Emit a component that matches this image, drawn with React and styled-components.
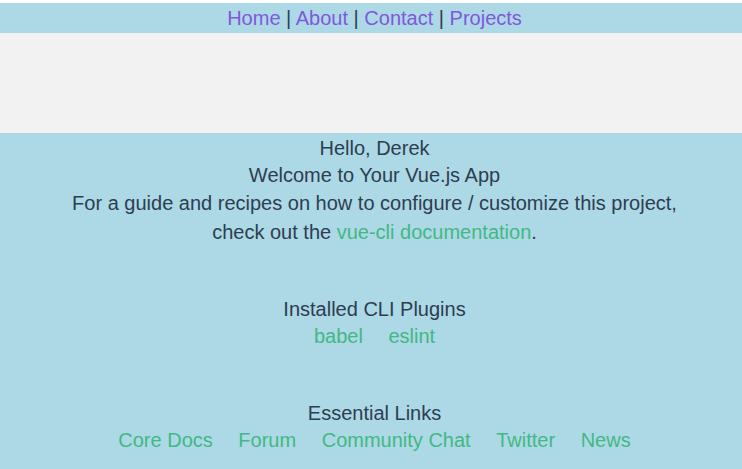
import { Fragment } from 'react';
import styled, { createGlobalStyle } from 'styled-components';

const GlobalStyle = createGlobalStyle`
  html, body {
    margin: 0;
    padding: 0;
    background: #ffffff;
  }
  body {
    padding-top: 3px;
    font-family: "Liberation Sans", Arial, sans-serif;
  }
`;

const plugins = ['babel', 'eslint'];
const links = ['Core Docs', 'Forum', 'Community Chat', 'Twitter', 'News'];
const navItems = ['Home', 'About', 'Contact', 'Projects'];

function App() {
  return (
    <Page>
      <GlobalStyle />
      <NavBar>
        {navItems.map((item, i) => (
          <span key={item}>
            {i > 0 && <Sep> | </Sep>}
            <NavLink href="#">{item}</NavLink>
          </span>
        ))}
      </NavBar>
      <Banner />
      <Content>
        <Line>Hello, Derek</Line>
        <Line>Welcome to Your Vue.js App</Line>
        <Intro>
          For a guide and recipes on how to configure / customize this project,
          <br />
          check out the <GreenLink href="#">vue-cli documentation</GreenLink>.
        </Intro>
        <Section $gap={49}>
          <Line>Installed CLI Plugins</Line>
          <LinkList>
            {plugins.map((p) => (
              <Fragment key={p}>
                <li>
                  <GreenLink href="#">{p}</GreenLink>
                </li>{' '}
              </Fragment>
            ))}
          </LinkList>
        </Section>
        <Section $gap={50}>
          <Line>Essential Links</Line>
          <LinkList>
            {links.map((l) => (
              <Fragment key={l}>
                <li>
                  <GreenLink href="#">{l}</GreenLink>
                </li>{' '}
              </Fragment>
            ))}
          </LinkList>
        </Section>
      </Content>
    </Page>
  );
}

export default App;

const Page = styled.div`
  background: lightblue;
  min-height: 466px;
  font-size: 20px;
  color: #2c3e50;
`;

const NavBar = styled.nav`
  height: 30px;
  line-height: 30px;
  text-align: center;
  font-size: 20px;
  padding-left: 7px;
`;

const NavLink = styled.a`
  color: #7f58dc;
  text-decoration: none;
`;

const Sep = styled.span`
  color: #2c3e50;
`;

const Banner = styled.div`
  height: 100px;
  background: #f2f2f2;
`;

const Content = styled.div`
  padding: 2px 0 0 7px;
  text-align: center;
  line-height: 27px;
`;

const Line = styled.div`
  margin: 0;
`;

const Intro = styled.p`
  margin: 0;
  line-height: 29px;
`;

const Section = styled.div`
  margin-top: ${(p) => p.$gap}px;
`;

const LinkList = styled.ul`
  list-style: none;
  margin: 0;
  padding: 0;

  li {
    display: inline-block;
    margin: 0 10px;
  }
`;

const GreenLink = styled.a`
  color: #42b983;
  text-decoration: none;
`;
